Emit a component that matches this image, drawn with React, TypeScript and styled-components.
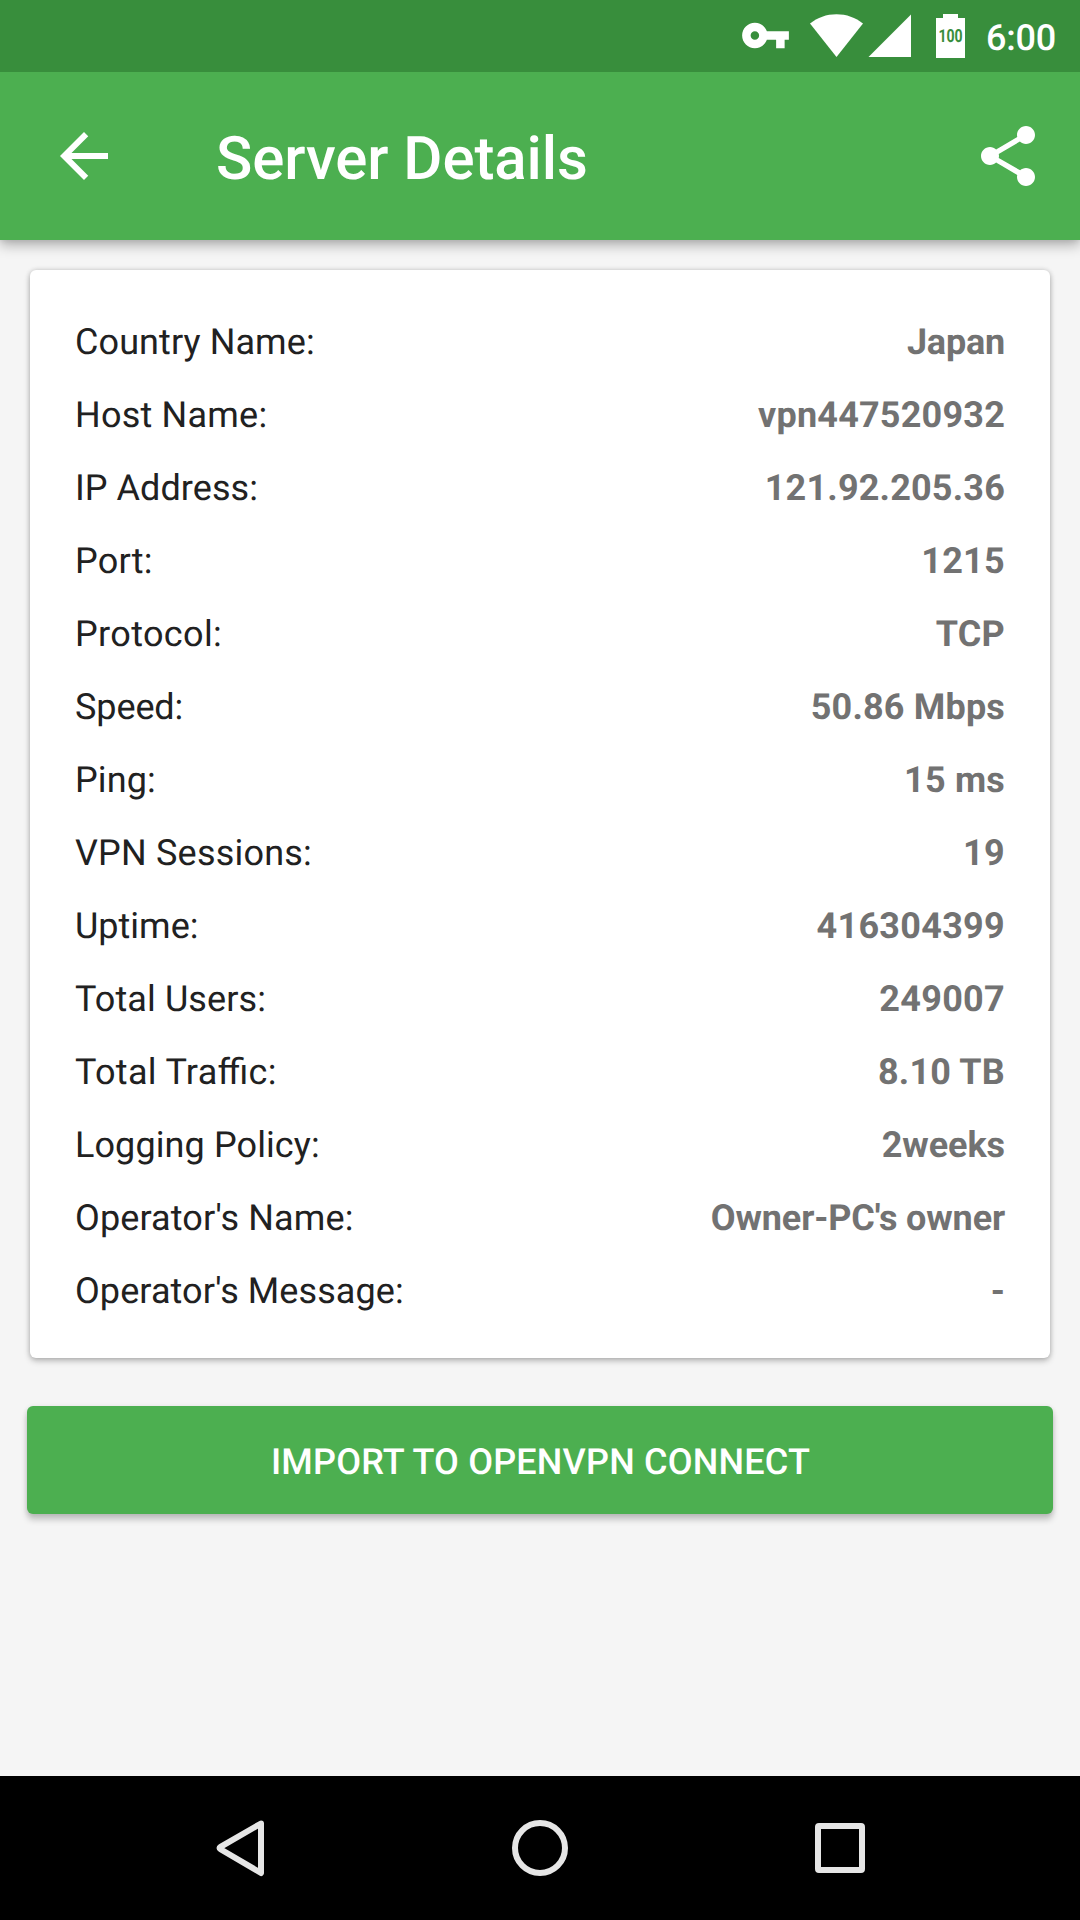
import React from "react";
import styled, { createGlobalStyle } from "styled-components";

const GlobalStyle = createGlobalStyle`
  * { box-sizing: border-box; }
  body { margin: 0; background: #f5f5f5; }
`;

const Screen = styled.div`
  display: flex;
  flex-direction: column;
  width: 1080px;
  height: 1920px;
  overflow: hidden;
  background: #f5f5f5;
  font-family: Roboto, "Noto Sans", sans-serif;
  text-rendering: geometricPrecision;
`;

const StatusBar = styled.div`
  flex: none;
  z-index: 2;
  display: flex;
  align-items: flex-start;
  height: 72px;
  padding-left: 740px;
  background: #388e3c;
  color: #fff;
`;

const StatusIcon = styled.svg<{ $left?: number; $top: number }>`
  flex: none;
  display: block;
  margin-left: ${(p) => p.$left ?? 0}px;
  margin-top: ${(p) => p.$top}px;
  fill: #fff;
`;

const Battery = styled.div`
  flex: none;
  display: flex;
  flex-direction: column;
  align-items: center;
  width: 29px;
  margin: 14px 0 0 25px;
`;

const BatteryTip = styled.div`
  width: 15px;
  height: 4px;
  background: #fff;
`;

const BatteryBody = styled.div`
  display: flex;
  align-items: center;
  justify-content: center;
  width: 29px;
  height: 40px;
  padding-bottom: 2px;
  background: #fff;
  color: #388e3c;
  font-size: 18px;
  font-weight: 700;
  line-height: 20px;
`;

const BatteryLevel = styled.span`
  transform: scaleX(0.78);
`;

const Clock = styled.div`
  margin: 17px 0 0 21px;
  font-size: 36px;
  font-weight: 500;
  line-height: 42px;
  letter-spacing: -0.2px;
`;

const Toolbar = styled.header`
  flex: none;
  z-index: 1;
  display: flex;
  align-items: center;
  height: 168px;
  padding: 0 36px 0 48px;
  background: #4caf50;
  color: #fff;
  box-shadow: 0 5px 12px rgba(0, 0, 0, 0.3), 0 0 6px rgba(0, 0, 0, 0.08);
`;

const Title = styled.h1`
  flex: 1;
  margin: 0 0 0 96px;
  font-size: 60px;
  font-weight: 500;
  line-height: 70px;
  letter-spacing: -0.08px;
  padding-top: 6px;
`;

const ActionIcon = styled.svg`
  flex: none;
  display: block;
  width: 72px;
  height: 72px;
  fill: #fff;
`;

const Content = styled.main`
  flex: 1;
  display: flex;
  flex-direction: column;
  padding: 30px 27px 0;
`;

const Card = styled.section`
  height: 1088px;
  margin: 0 3px;
  padding: 35px 45px 0;
  border-radius: 6px;
  background: #fff;
  box-shadow: 0 3px 6px rgba(0, 0, 0, 0.23), 0 0 5px rgba(0, 0, 0, 0.16);
`;

const Row = styled.div`
  display: flex;
  align-items: center;
  justify-content: space-between;
  height: 73px;
  font-size: 36px;
  line-height: 42px;
`;

const Label = styled.span<{ $tracking: number }>`
  color: #212121;
  font-feature-settings: "liga" 1;
  letter-spacing: ${(p) => p.$tracking}px;
`;

const Value = styled.span<{ $tracking: number }>`
  color: #727272;
  font-weight: 700;
  letter-spacing: ${(p) => p.$tracking}px;
`;

const ImportButton = styled.button`
  height: 108px;
  margin: 48px 0 0;
  padding: 3px 0 0 1px;
  border: 0;
  border-radius: 6px;
  background: #4caf50;
  color: #fff;
  font: 500 36px/42px Roboto, "Noto Sans", sans-serif;
  letter-spacing: 0.19px;
  text-rendering: inherit;
  box-shadow: 0 6px 6px rgba(0, 0, 0, 0.19), 0 1px 5px rgba(0, 0, 0, 0.12);
`;

const NavBar = styled.nav`
  flex: none;
  display: flex;
  align-items: center;
  justify-content: center;
  gap: 228px;
  height: 144px;
  background: #000;
`;

const NavIcon = styled.svg`
  display: block;
  width: 72px;
  height: 72px;
  fill: none;
  stroke: #e6e6e6;
  stroke-width: 6;
  stroke-linejoin: round;
`;

type Detail = {
  label: string;
  value: string;
  labelTracking?: number;
  valueTracking?: number;
};

const details: Detail[] = [
  { label: "Country Name:", value: "Japan", labelTracking: 0.09, valueTracking: -0.2 },
  { label: "Host Name:", value: "vpn447520932", labelTracking: 0.22, valueTracking: 0.2 },
  { label: "IP Address:", value: "121.92.205.36", labelTracking: 0.05, valueTracking: 0.18 },
  { label: "Port:", value: "1215", labelTracking: 0.25, valueTracking: 0.3 },
  { label: "Protocol:", value: "TCP", labelTracking: 0.36, valueTracking: 0.2 },
  { label: "Speed:", value: "50.86 Mbps", labelTracking: -0.1, valueTracking: 0.17 },
  { label: "Ping:", value: "15 ms", labelTracking: 0.1, valueTracking: 0.2 },
  { label: "VPN Sessions:", value: "19", labelTracking: 0.2, valueTracking: 0.3 },
  { label: "Uptime:", value: "416304399", valueTracking: 0.29 },
  { label: "Total Users:", value: "249007", labelTracking: 0.1, valueTracking: 0.3 },
  { label: "Total Traffic:", value: "8.10 TB", labelTracking: 0.3, valueTracking: 0.2 },
  { label: "Logging Policy:", value: "2weeks", labelTracking: 0.1, valueTracking: -0.08 },
  { label: "Operator's Name:", value: "Owner-PC's owner", labelTracking: 0.12, valueTracking: -0.13 },
  { label: "Operator's Message:", value: "-", labelTracking: 0.08 },
];

export default function App() {
  return (
    <>
      <GlobalStyle />
      <Screen>
        <StatusBar>
          <StatusIcon $top={10} width="51" height="51" viewBox="0 0 24 24">
            <path d="M12.65 10C11.83 7.67 9.61 6 7 6c-3.31 0-6 2.69-6 6s2.69 6 6 6c2.61 0 4.83-1.67 5.65-4H17v4h4v-4h2v-4H12.65zM7 14c-1.1 0-2-.9-2-2s.9-2 2-2 2 .9 2 2-.9 2-2 2z" />
          </StatusIcon>
          <StatusIcon $left={19} $top={14} width="53" height="43" viewBox="0 0 53 43">
            <path d="M26.5 43L0 9.5C7.5 3.5 16.5.2 26.5.2S45.5 3.5 53 9.5z" />
          </StatusIcon>
          <StatusIcon $left={5} $top={14} width="43" height="43" viewBox="0 0 43 43">
            <path d="M.5 43H43V.5z" />
          </StatusIcon>
          <Battery>
            <BatteryTip />
            <BatteryBody>
              <BatteryLevel>100</BatteryLevel>
            </BatteryBody>
          </Battery>
          <Clock>6:00</Clock>
        </StatusBar>
        <Toolbar>
          <ActionIcon viewBox="0 0 24 24" aria-label="Back">
            <path d="M20 11H7.83l5.59-5.59L12 4l-8 8 8 8 1.41-1.41L7.83 13H20v-2z" />
          </ActionIcon>
          <Title>Server Details</Title>
          <ActionIcon viewBox="0 0 24 24" aria-label="Share">
            <path d="M18 16c-.8 0-1.44.3-1.96.77L8.91 12.7c.05-.23.09-.46.09-.7s-.04-.47-.09-.7l7.05-4.11c.54.5 1.25.81 2.04.81 1.66 0 3-1.34 3-3s-1.34-3-3-3-3 1.34-3 3c0 .24.04.47.09.7L8.04 9.81C7.5 9.31 6.79 9 6 9c-1.66 0-3 1.34-3 3s1.34 3 3 3c.79 0 1.5-.31 2.04-.81l7.05 4.11c-.05.22-.09.45-.09.7 0 1.66 1.34 3 3 3s3-1.34 3-3-1.34-3-3-3z" />
          </ActionIcon>
        </Toolbar>
        <Content>
          <Card>
            {details.map((d) => (
              <Row key={d.label}>
                <Label $tracking={d.labelTracking ?? 0}>{d.label}</Label>
                <Value $tracking={d.valueTracking ?? 0}>{d.value}</Value>
              </Row>
            ))}
          </Card>
          <ImportButton>IMPORT TO OPENVPN CONNECT</ImportButton>
        </Content>
        <NavBar>
          <NavIcon viewBox="0 0 72 72">
            <path d="M16.5 34.8Q14.5 36 16.5 37.2L57 61V11.5z" />
          </NavIcon>
          <NavIcon viewBox="0 0 72 72">
            <circle cx="36" cy="36" r="25" />
          </NavIcon>
          <NavIcon viewBox="0 0 72 72">
            <rect x="14" y="14" width="44" height="44" rx="1" />
          </NavIcon>
        </NavBar>
      </Screen>
    </>
  );
}
